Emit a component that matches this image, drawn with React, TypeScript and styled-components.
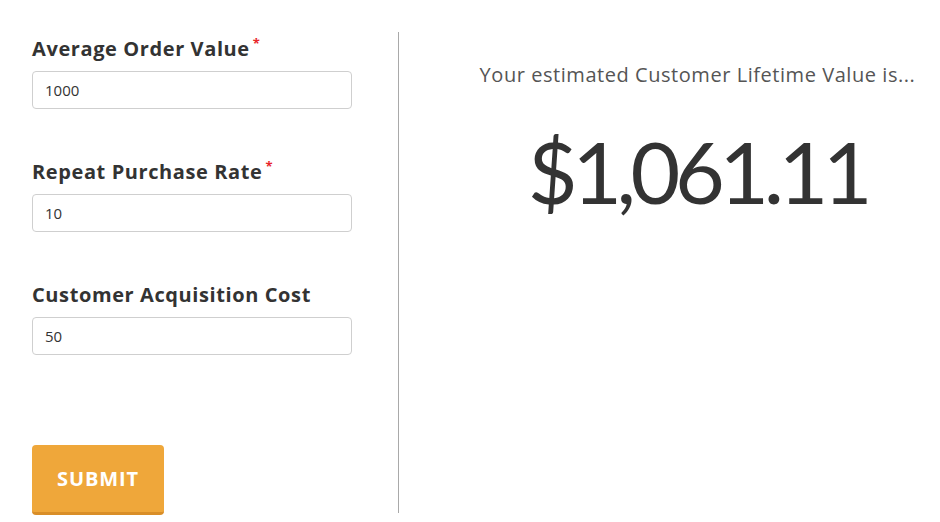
import { createGlobalStyle, styled } from "styled-components";

const GlobalStyle = createGlobalStyle`
    body {
        margin: 0;
        background: #fff;
        font-family: "Open Sans", Lato, sans-serif;
        color: #333;
    }
`

const Page = styled.div`
    display: flex;
    height: 522px;
    padding-top: 32px;
    box-sizing: border-box;
`

const FormColumn = styled.form`
    display: flex;
    flex-direction: column;
    width: 320px;
    padding-left: 32px;
    padding-right: 46px;
`

const Field = styled.div`
    display: flex;
    flex-direction: column;
    margin-bottom: 46px;
`

const Label = styled.label`
    font-size: 20px;
    font-weight: 700;
    line-height: 24px;
    letter-spacing: 0.6px;
    margin-top: 5px;
    margin-bottom: 10px;
    color: #333;
`

const Required = styled.span`
    color: #e8262b;
    font-size: 13px;
    margin-left: 3px;
    vertical-align: top;
    line-height: 0;
    position: relative;
    top: 6px;
`

const Input = styled.input`
    height: 38px;
    box-sizing: border-box;
    border: 1px solid #cfcfcf;
    border-radius: 4px;
    padding: 0 12px;
    font-family: "Open Sans", sans-serif;
    font-size: 15px;
    color: #333;
    outline: none;
`

const SubmitButton = styled.button`
    width: 132px;
    height: 70px;
    margin-top: 44px;
    padding: 0;
    background: #efa73a;
    border: none;
    border-bottom: 3px solid #d98e28;
    border-radius: 4px;
    color: #fff;
    font-family: "Open Sans", sans-serif;
    font-size: 20px;
    font-weight: 700;
    letter-spacing: 0.9px;
    cursor: pointer;
`

const Divider = styled.div`
    width: 1px;
    height: 481px;
    background: #a9a9a9;
`

const ResultPanel = styled.div`
    flex: 1;
    display: flex;
    flex-direction: column;
    align-items: center;
    padding-left: 56px;
`

const ResultLead = styled.p`
    margin: 31px 0 0 0;
    font-size: 20px;
    font-weight: 400;
    line-height: 24px;
    letter-spacing: 0.55px;
    color: #555;
`

const ResultValue = styled.div`
    margin-top: 39px;
    font-family: Lato, sans-serif;
    font-size: 86px;
    font-weight: 400;
    line-height: 90px;
    letter-spacing: -5.5px;
    color: #333;
`

type FieldProps = {
    label: string,
    value: string,
    required?: boolean
}

function FormField(props: FieldProps) {
    return (
        <Field>
            <Label>
                {props.label}
                {props.required && <Required>*</Required>}
            </Label>
            <Input defaultValue={props.value} />
        </Field>
    )
}

export default function App() {
    return (
        <>
            <GlobalStyle />
            <Page>
                <FormColumn onSubmit={e => e.preventDefault()}>
                    <FormField label="Average Order Value" value="1000" required />
                    <FormField label="Repeat Purchase Rate" value="10" required />
                    <FormField label="Customer Acquisition Cost" value="50" />
                    <SubmitButton type="submit">SUBMIT</SubmitButton>
                </FormColumn>
                <Divider />
                <ResultPanel>
                    <ResultLead>Your estimated Customer Lifetime Value is...</ResultLead>
                    <ResultValue>$1,061.11</ResultValue>
                </ResultPanel>
            </Page>
        </>
    )
}
